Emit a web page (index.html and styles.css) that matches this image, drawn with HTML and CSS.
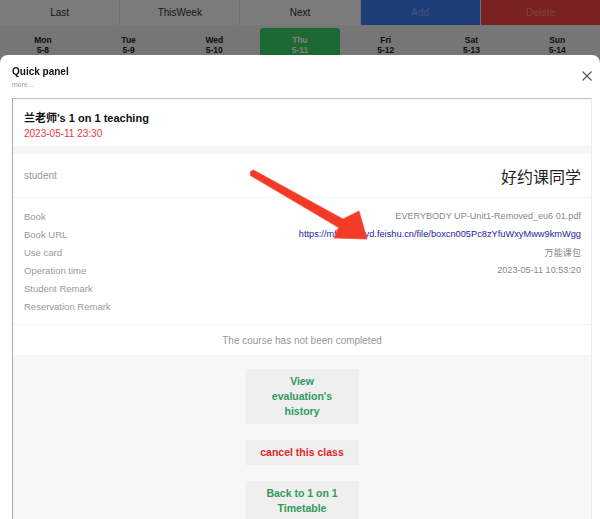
FILE: index.html
```html
<!DOCTYPE html>
<html lang="en">
<head>
  <meta charset="UTF-8" />
  <meta name="viewport" content="width=device-width, initial-scale=1.0" />
  <title>Timetable</title>
  <link rel="stylesheet" href="styles.css">
</head>
<body>
  <div class="toolbar">
    <button class="tool-btn">Last</button>
    <button class="tool-btn">ThisWeek</button>
    <button class="tool-btn">Next</button>
    <button class="tool-btn add">Add</button>
    <button class="tool-btn delete">Delete</button>
  </div>

  <div class="week">
    <div class="day"><div class="day-box">Mon<br>5-8</div></div>
    <div class="day"><div class="day-box">Tue<br>5-9</div></div>
    <div class="day"><div class="day-box">Wed<br>5-10</div></div>
    <div class="day"><div class="day-box active">Thu<br>5-11</div></div>
    <div class="day"><div class="day-box">Fri<br>5-12</div></div>
    <div class="day"><div class="day-box">Sat<br>5-13</div></div>
    <div class="day"><div class="day-box">Sun<br>5-14</div></div>
  </div>

  <div class="mask"></div>

  <div class="sheet">
    <div class="sheet-header">
      <div class="sheet-title">Quick panel</div>
      <div class="sheet-more">more...</div>
      <button class="sheet-close">
        <svg width="10" height="10" viewBox="0 0 10 10">
          <path d="M0.5 0.5 L9.5 9.5 M9.5 0.5 L0.5 9.5" stroke="#555" stroke-width="1.1" fill="none" />
        </svg>
      </button>
    </div>

    <div class="card">
      <div class="card-head">
        <div class="lesson-title">兰老师's 1 on 1 teaching</div>
        <div class="lesson-time">2023-05-11 23:30</div>
      </div>

      <div class="student-row">
        <span class="label">student</span>
        <span class="student-name">好约课同学</span>
      </div>

      <div class="info">
        <div class="info-row"><span class="label">Book</span><span class="value">EVERYBODY UP-Unit1-Removed_eu6 01.pdf</span></div>
        <div class="info-row"><span class="label">Book URL</span><a class="value link" href="#">https://mfob493jyd.feishu.cn/file/boxcn005Pc8zYfuWxyMww9kmWgg</a></div>
        <div class="info-row"><span class="label">Use card</span><span class="value">万能课包</span></div>
        <div class="info-row"><span class="label">Operation time</span><span class="value">2023-05-11 10:53:20</span></div>
        <div class="info-row"><span class="label">Student Remark</span><span class="value"></span></div>
        <div class="info-row"><span class="label">Reservation Remark</span><span class="value"></span></div>
      </div>

      <div class="status">The course has not been completed</div>

      <div class="actions">
        <button class="action-btn green">View<br>evaluation's<br>history</button>
        <button class="action-btn red">cancel this class</button>
        <button class="action-btn green">Back to 1 on 1<br>Timetable</button>
      </div>
    </div>
  </div>

  <!-- annotation arrow -->
  <svg class="arrow" width="600" height="519" viewBox="0 0 600 519">
    <path d="M250.5 175.5 Q249 171 253.5 170 L343 219 L359 211 L367 239 L334 238 L338.5 227.5 Z" fill="#f23a26" stroke="#f5573f" stroke-width="0.8" stroke-linejoin="round" />
  </svg>
</body>
</html>
```

FILE: styles.css
```css
body {
  font-family: "Liberation Sans", Arial, "Noto Sans CJK SC", sans-serif;
  margin: 0;
  padding: 0;
  width: 600px;
  height: 519px;
  overflow: hidden;
  background: #fff;
}

.toolbar {
  display: flex;
  gap: 1px;
  height: 25px;
  background: #e2e2e2;
}

.tool-btn {
  flex: 1;
  border: none;
  background: #f6f6f6;
  color: #333;
  font-family: inherit;
  font-size: 10px;
  padding: 0;
}

.tool-btn.add {
  background: #3b7cf0;
  color: rgba(255, 255, 255, 0.35);
}

.tool-btn.delete {
  background: #f24444;
  color: rgba(255, 255, 255, 0.35);
}

.week {
  display: flex;
  background: #ececec;
  height: 40px;
}

.day {
  flex: 1;
  padding: 3px 3px 0;
}

.day-box {
  text-align: center;
  font-size: 8.5px;
  font-weight: bold;
  line-height: 10px;
  color: #222;
  padding-top: 7px;
  height: 30px;
  border-radius: 3px 3px 0 0;
}

.day-box.active {
  background: #3ad268;
  color: #fff;
}

.mask {
  position: fixed;
  inset: 0;
  background: rgba(0, 0, 0, 0.5);
}

.sheet {
  position: fixed;
  top: 55px;
  left: 0;
  right: 0;
  bottom: 0;
  background: #fff;
  border-radius: 8px 8px 0 0;
  overflow: hidden;
}

.sheet-header {
  position: relative;
  padding: 11px 12px 9px;
}

.sheet-title {
  font-size: 10px;
  font-weight: bold;
  line-height: 12px;
  color: #111;
}

.sheet-more {
  font-size: 7px;
  line-height: 9px;
  color: #999;
  margin-top: 2px;
}

.sheet-close {
  position: absolute;
  right: 8px;
  top: 16px;
  padding: 0;
  border: none;
  background: none;
  width: 10px;
  height: 10px;
  display: flex;
}

.card {
  margin: 0 8px 0 12px;
  border: 1px solid #ececec;
  border-left-color: #a9a9a9;
  border-top-color: #bdbdbd;
  border-bottom: none;
}

.card-head {
  padding: 12px 11px 5px;
  border-bottom: 8px solid #f5f5f5;
}

.lesson-title {
  font-size: 11px;
  font-weight: bold;
  line-height: 14px;
  color: #111;
}

.lesson-time {
  font-size: 10px;
  line-height: 14px;
  color: #e6393f;
  margin-top: 2px;
}

.student-row {
  display: flex;
  justify-content: space-between;
  align-items: center;
  height: 43px;
  padding: 0 10px 0 11px;
  border-bottom: 1px solid #f2f2f2;
}

.student-name {
  font-family: "Noto Sans CJK SC", sans-serif;
  font-size: 16px;
  color: #222;
}

.label {
  font-size: 9.5px;
  color: #999;
}

.student-row .label {
  font-size: 10px;
}

.info {
  padding: 9px 10px 9px 11px;
  border-bottom: 1px solid #f2f2f2;
}

.info-row {
  display: flex;
  justify-content: space-between;
  align-items: center;
  height: 18px;
}

.value {
  font-size: 9.1px;
  color: #888;
}

.value.link {
  font-size: 9.25px;
  color: #2323a3;
  text-decoration: none;
}

.status {
  text-align: center;
  font-size: 10px;
  color: #999;
  height: 30px;
  line-height: 31px;
}

.actions {
  background: #f7f7f7;
  display: flex;
  flex-direction: column;
  align-items: center;
  gap: 16px;
  padding: 14px 0 20px;
}

.action-btn {
  width: 114px;
  padding: 5px 0;
  border: none;
  background: #efefef;
  font-family: inherit;
  font-size: 10.5px;
  font-weight: bold;
  line-height: 15px;
}

.action-btn.green {
  color: #2e9b5c;
}

.action-btn.red {
  color: #e0262b;
}

.arrow {
  position: fixed;
  top: 0;
  left: 0;
  pointer-events: none;
}
```
